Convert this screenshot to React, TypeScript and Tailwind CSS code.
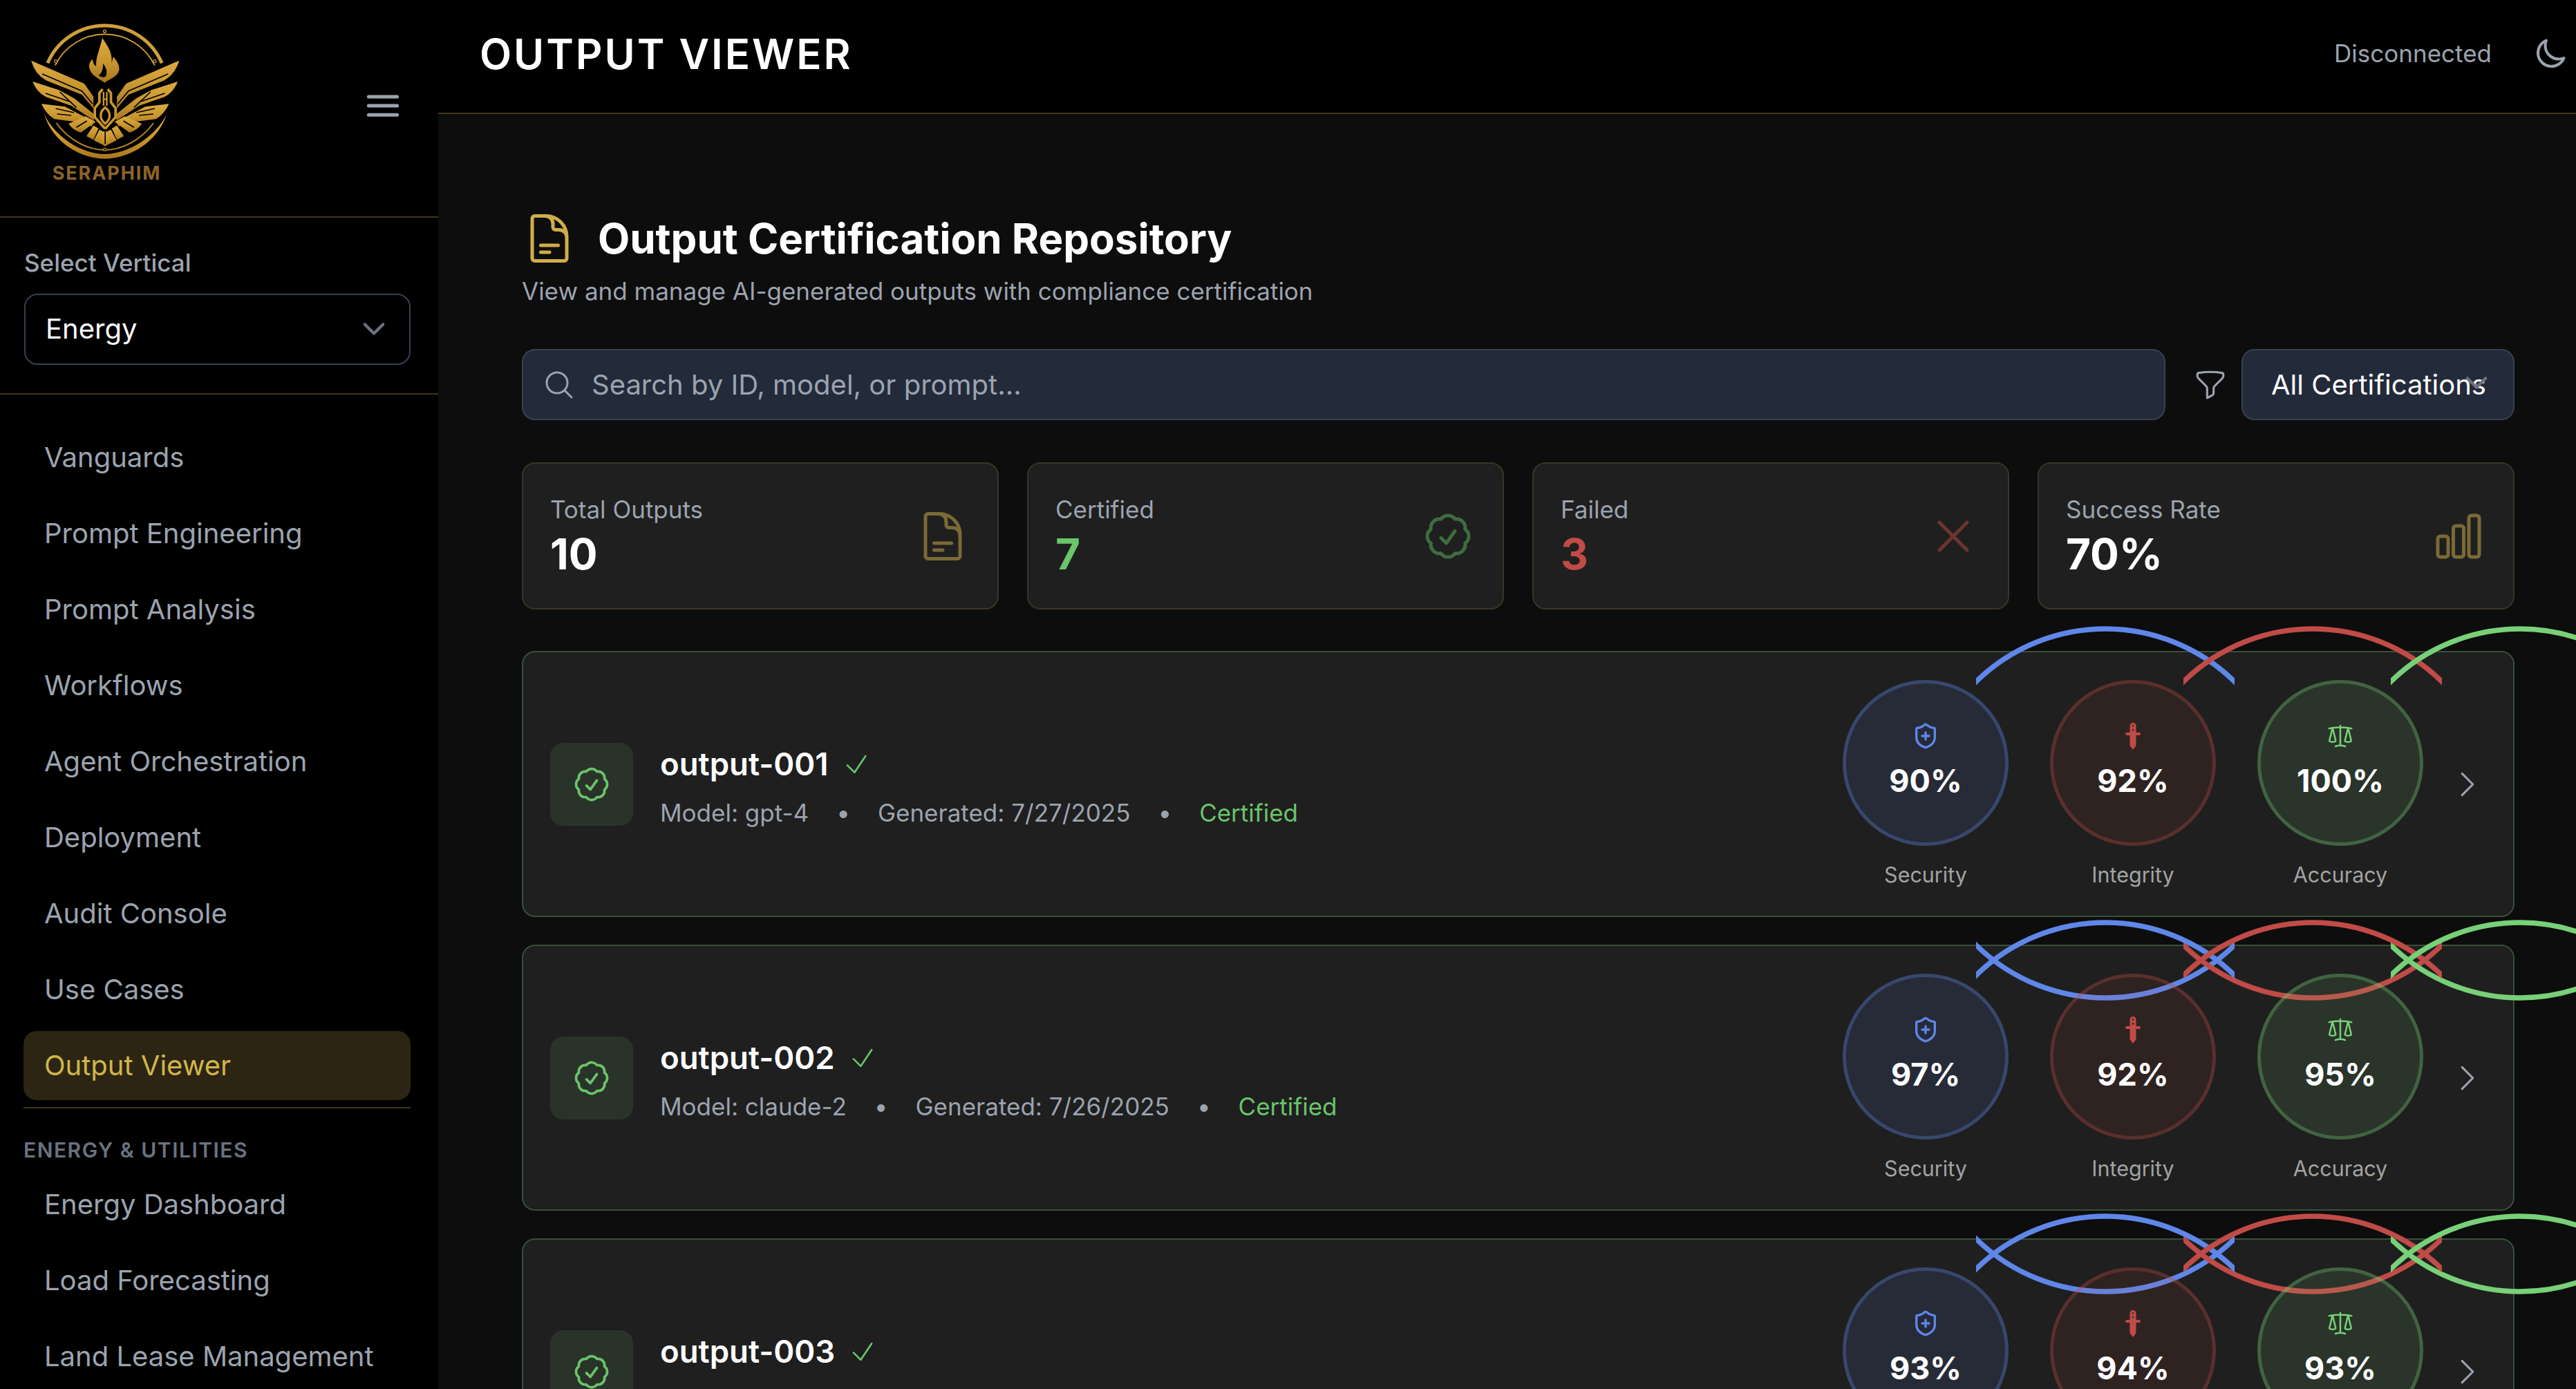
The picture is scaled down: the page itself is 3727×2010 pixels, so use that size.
import { ShieldPlus } from "lucide-react";
import {
  HiOutlineBars3,
  HiOutlineChartBar,
  HiOutlineCheck,
  HiOutlineCheckBadge,
  HiOutlineChevronDown,
  HiOutlineChevronRight,
  HiOutlineDocumentText,
  HiOutlineFunnel,
  HiOutlineMagnifyingGlass,
  HiOutlineMoon,
  HiOutlineScale,
  HiOutlineXMark,
} from "react-icons/hi2";

const navItems = [
  "Vanguards",
  "Prompt Engineering",
  "Prompt Analysis",
  "Workflows",
  "Agent Orchestration",
  "Deployment",
  "Audit Console",
  "Use Cases",
];

const energyItems = ["Energy Dashboard", "Load Forecasting", "Land Lease Management"];

const outputs = [
  { id: "output-001", model: "gpt-4", date: "7/27/2025", security: 90, integrity: 92, accuracy: 100 },
  { id: "output-002", model: "claude-2", date: "7/26/2025", security: 97, integrity: 92, accuracy: 95 },
  { id: "output-003", model: "gpt-4", date: "7/25/2025", security: 93, integrity: 94, accuracy: 93 },
];

function Logo() {
  const wing = (
    <g>
      <path d="M76 204 L306 304 L346 360 L346 412 L296 352 L140 290 Q92 262 76 204Z" />
      <path d="M82 295 L196 332 L262 368 L348 436 L348 464 L250 400 L140 362 Q100 342 82 295Z" />
      <path d="M120 392 L222 404 L346 468 L340 490 L270 470 L176 458 Q140 436 120 392Z" />
      <path d="M238 478 L312 446 L356 470 L292 516 Q258 508 238 478Z" />
      <path d="M346 486 L368 498 L346 548 L316 532Z" />
      <path d="M372 504 L386 510 L378 566 L348 550Z" />
      <path d="M124 262 L296 336 L342 392" fill="none" stroke="#000" strokeWidth="5" />
      <path d="M138 346 L250 384 M200 340 L272 408" fill="none" stroke="#000" strokeWidth="5" />
      <path d="M182 412 L262 430 M188 436 L250 442" fill="none" stroke="#000" strokeWidth="5" />
      <path d="M272 494 L318 466" fill="none" stroke="#000" strokeWidth="5" />
    </g>
  );

  return (
    <svg viewBox="70 40 650 600" className="w-[217px] h-[200px]">
      <defs>
        <linearGradient id="gold" x1="0" y1="0" x2="0" y2="1">
          <stop offset="0" stopColor="#dcaa40" />
          <stop offset="0.55" stopColor="#c8962f" />
          <stop offset="1" stopColor="#a9761f" />
        </linearGradient>
      </defs>
      <g fill="url(#gold)" stroke="none">
        <path d="M147 215 A270 270 0 0 1 643 215" fill="none" stroke="#cf9f38" strokeWidth="15" />
        <path d="M180 225 A240 240 0 0 1 612 225" fill="none" stroke="#c9982f" strokeWidth="6" />
        <circle cx="395" cy="77" r="6" fill="#000" stroke="#c9982f" strokeWidth="4" />
        <circle cx="183" cy="207" r="6" fill="#000" stroke="#c9982f" strokeWidth="4" />
        <circle cx="612" cy="207" r="6" fill="#000" stroke="#c9982f" strokeWidth="4" />
        <path d="M395 300 C375 285 335 270 328 235 C325 215 335 205 342 198 C345 215 350 225 358 228 C355 190 375 150 385 105 C405 140 430 165 425 215 C428 205 430 195 432 188 C450 205 460 230 458 245 C450 275 415 285 395 300Z" />
        <path d="M368 268 C380 262 388 244 388 216 C402 236 408 252 400 272 C394 280 378 276 368 268Z" fill="#000" />
        {wing}
        <g transform="translate(794 0) scale(-1 1)">{wing}</g>
        <path d="M386 512 L408 512 L420 562 L397 576 L374 562Z" />
        <path d="M397 512 L397 566" stroke="#000" strokeWidth="5" fill="none" />
        <path d="M397 500 L352 450 L352 410 L372 385 L372 345 L386 328 M397 500 L442 450 L442 410 L422 385 L422 345 L408 328" fill="none" stroke="#c8962f" strokeWidth="11" />
        <path d="M390 340 L390 400 M404 340 L404 400 M390 372 L404 372" fill="none" stroke="#c8962f" strokeWidth="7" />
        <path d="M397 408 C420 425 425 455 397 478 C369 455 374 425 397 408Z" fill="none" stroke="#c8962f" strokeWidth="10" />
        <path d="M132 436 C170 560 290 630 395 630 C500 630 625 560 664 436 C620 530 500 610 395 610 C290 610 175 530 132 436Z" />
        <path d="M185 475 C240 550 320 592 395 592 C470 592 552 550 607 475" fill="none" stroke="#b9862a" strokeWidth="6" />
        <circle cx="395" cy="590" r="6" fill="#000" stroke="#b9862a" strokeWidth="4" />
      </g>
    </svg>
  );
}

function Dagger() {
  return (
    <svg viewBox="0 0 40 40" className="w-[40px] h-[40px]" fill="#c04b47">
      <path
        fillRule="evenodd"
        d="M15.5 15 V5.5 a4.5 4.5 0 0 1 9 0 V15 H29 a1.5 1.5 0 0 1 0 4 H24.5 V34 L20 40 L15.5 34 V19 H11 a1.5 1.5 0 0 1 0 -4Z M20 4 a1.3 1.3 0 1 0 0.01 0Z M20 10 a1.3 1.3 0 1 0 0.01 0Z"
      />
    </svg>
  );
}

const tones = {
  blue: { ring: "border-[#5f87ea]/30", fill: "bg-[#5f87ea]/12", stroke: "#5f87ea" },
  red: { ring: "border-[#c04b47]/30", fill: "bg-[#c04b47]/10", stroke: "#c04b47" },
  green: { ring: "border-[#78d078]/30", fill: "bg-[#78d078]/12", stroke: "#78d078" },
};

function Metric({
  tone,
  value,
  label,
  icon,
}: {
  tone: keyof typeof tones;
  value: number;
  label: string;
  icon: React.ReactNode;
}) {
  const t = tones[tone];

  return (
    <div className="flex flex-col items-center w-[240px]">
      <div className="relative w-[240px] h-[240px]">
        {/* the progress ring overflows its box and gets cut at the sides */}
        <svg className="absolute left-[193px] top-[-78px] w-[374px] h-[545px] overflow-hidden" viewBox="0 0 374 545">
          <circle cx="187" cy="271" r="267" fill="none" stroke={t.stroke} strokeWidth="7.5" />
        </svg>
        <div className={`absolute inset-0 rounded-full border-[5px] flex flex-col items-center justify-center ${t.ring} ${t.fill}`}>
          <div className="flex items-center justify-center h-[40px]">{icon}</div>
          <span className="mt-[12px] text-[45px] leading-[66px] font-bold text-white">{value}%</span>
        </div>
      </div>
      <span className="mt-[23px] text-[30.5px] leading-[38px] text-[#a3a3a3]">{label}</span>
    </div>
  );
}

function OutputRow({ output }: { output: (typeof outputs)[number] }) {
  return (
    <div className="flex items-center justify-between rounded-[19px] border-2 border-[#38503a] bg-[#1f1f1f] pl-[39px] pr-[41px] py-[40px]">
      <div className="flex items-center gap-[39px]">
        <div className="flex items-center justify-center w-[120px] h-[120px] rounded-[19px] bg-[#2a332a]">
          <HiOutlineCheckBadge size={60} color="#6ac46a" />
        </div>
        <div className="pt-[5px]">
          <div className="flex items-center gap-[19px]">
            <span className="text-[45.5px] leading-[66px] font-semibold text-white">{output.id}</span>
            <HiOutlineCheck size={42} color="#6ac46a" />
          </div>
          <div className="mt-[14px] flex items-center gap-[40px] text-[35px] leading-[47.5px] text-[#9ca3af]">
            <span>Model: {output.model}</span>
            <span>•</span>
            <span>Generated: {output.date}</span>
            <span>•</span>
            <span className="text-[#6ac46a]">Certified</span>
          </div>
        </div>
      </div>
      <div className="flex items-center gap-[39px]">
        <div className="flex gap-[60px]">
          <Metric tone="blue" value={output.security} label="Security" icon={<ShieldPlus size={40} color="#5f87ea" />} />
          <Metric tone="red" value={output.integrity} label="Integrity" icon={<Dagger />} />
          <Metric tone="green" value={output.accuracy} label="Accuracy" icon={<HiOutlineScale size={40} color="#78d078" />} />
        </div>
        <HiOutlineChevronRight size={50} color="#9ca3af" />
      </div>
    </div>
  );
}

function StatCard({
  label,
  value,
  valueClass,
  icon,
}: {
  label: string;
  value: string;
  valueClass: string;
  icon: React.ReactNode;
}) {
  return (
    <div className="flex items-center justify-between h-[213px] rounded-[19px] border-2 border-[#3a3526] bg-[#1f1f1f] px-[39px]">
      <div>
        <p className="text-[35px] leading-[47.5px] text-[#9ca3af]">{label}</p>
        <p className={`mt-[5px] text-[62px] leading-[71px] font-bold ${valueClass}`}>{value}</p>
      </div>
      {icon}
    </div>
  );
}

export default function App() {
  return (
    <div className="flex w-[3727px] h-[2010px] overflow-hidden bg-black font-['Inter',sans-serif]">
      <aside className="w-[634px] shrink-0 bg-black">
        <div className="flex justify-between h-[315px] border-b-2 border-[#3f3618] pl-[43px] pr-[50px] pt-[33px]">
          <div className="flex flex-col items-center w-[217px]">
            <Logo />
            <span className="mt-[2px] ml-[6px] text-[27px] leading-[32px] font-bold tracking-[0.07em] text-[#8f6428]">SERAPHIM</span>
          </div>
          <HiOutlineBars3 size={60} color="#9ca3af" strokeWidth={2} className="mt-[90px]" />
        </div>

        <div className="h-[256px] border-b-2 border-[#3f3618] pl-[35px] pr-[40px] pt-[42px]">
          <p className="text-[35px] leading-[47.5px] font-medium text-[#9ca3af]">Select Vertical</p>
          <div className="mt-[20px] flex items-center justify-between h-[103px] rounded-[19px] border-2 border-[#374151] pl-[29px] pr-[30px] text-[40px] text-white">
            Energy
            <HiOutlineChevronDown size={42} color="#6b7280" strokeWidth={2.5} />
          </div>
        </div>

        <nav className="pl-[34px] pr-[40px] pt-[41px] text-[40px] text-[#9ca3af]">
          <div className="flex flex-col gap-[10px]">
            {navItems.map((item) => (
              <div key={item} className="flex items-center h-[100px] px-[30px]">
                {item}
              </div>
            ))}
            <div className="flex items-center h-[100px] px-[30px] rounded-[19px] bg-[#2c2514] text-[#d2b548]">Output Viewer</div>
          </div>
          <div className="mt-[10px] border-t-2 border-[#3f3618] pt-[41px]">
            <p className="text-[30px] leading-[38px] font-semibold tracking-[0.05em] text-[#6b7280]">ENERGY &amp; UTILITIES</p>
            <div className="mt-[10px] flex flex-col gap-[10px]">
              {energyItems.map((item) => (
                <div key={item} className="flex items-center h-[100px] px-[30px]">
                  {item}
                </div>
              ))}
            </div>
          </div>
        </nav>
      </aside>

      <div className="flex-1 min-w-0 flex flex-col">
        <header className="flex items-center justify-between h-[165px] shrink-0 border-b-2 border-[#3f3618] bg-black pl-[60px] pr-[13px] pb-[8px]">
          <h1 className="text-[60px] font-semibold tracking-[0.05em] text-white">OUTPUT VIEWER</h1>
          <div className="flex items-center gap-[61px]">
            <span className="text-[35px] text-[#9ca3af]">Disconnected</span>
            <HiOutlineMoon size={48} color="#9ca3af" strokeWidth={2} />
          </div>
        </header>

        <main className="flex-1 bg-[#0d0d0d] pl-[121px] pr-[89px] pt-[140px]">
          <div className="flex items-center gap-[30px]">
            <HiOutlineDocumentText size={80} color="#cfae4a" />
            <h2 className="text-[60px] leading-[80px] font-bold text-white">Output Certification Repository</h2>
          </div>
          <p className="mt-[8px] text-[35px] leading-[57px] text-[#9ca3af]">View and manage AI-generated outputs with compliance certification</p>

          <div className="mt-[55px] flex items-center">
            <div className="flex-1 flex items-center gap-[23px] h-[103px] rounded-[19px] border-2 border-[#374151] bg-[#232a3a] pl-[28px] text-[40px] text-[#9ca3af]">
              <HiOutlineMagnifyingGlass size={48} color="#9ca3af" />
              Search by ID, model, or prompt...
            </div>
            <HiOutlineFunnel size={50} color="#9ca3af" className="ml-[40px]" />
            <div className="relative ml-[20px] flex items-center w-[395px] h-[103px] rounded-[19px] border-2 border-[#374151] bg-[#232a3a] pl-[41px] text-[40px] text-white">
              <span>All Certifications</span>
              <HiOutlineChevronDown size={42} color="#6b7280" strokeWidth={2.5} className="absolute right-[32px] top-[26px]" />
            </div>
          </div>

          <div className="mt-[61px] grid grid-cols-4 gap-[41px]">
            <StatCard label="Total Outputs" value="10" valueClass="text-white" icon={<HiOutlineDocumentText size={80} color="#7a6a36" />} />
            <StatCard label="Certified" value="7" valueClass="text-[#6ac46a]" icon={<HiOutlineCheckBadge size={80} color="#3f6b40" />} />
            <StatCard label="Failed" value="3" valueClass="text-[#c04b47]" icon={<HiOutlineXMark size={80} color="#6e3431" />} />
            <StatCard label="Success Rate" value="70%" valueClass="text-white" icon={<HiOutlineChartBar size={80} color="#7a6a36" />} />
          </div>

          <div className="mt-[60px] flex flex-col gap-[40px]">
            {outputs.map((output) => (
              <OutputRow key={output.id} output={output} />
            ))}
          </div>
        </main>
      </div>
    </div>
  );
}
